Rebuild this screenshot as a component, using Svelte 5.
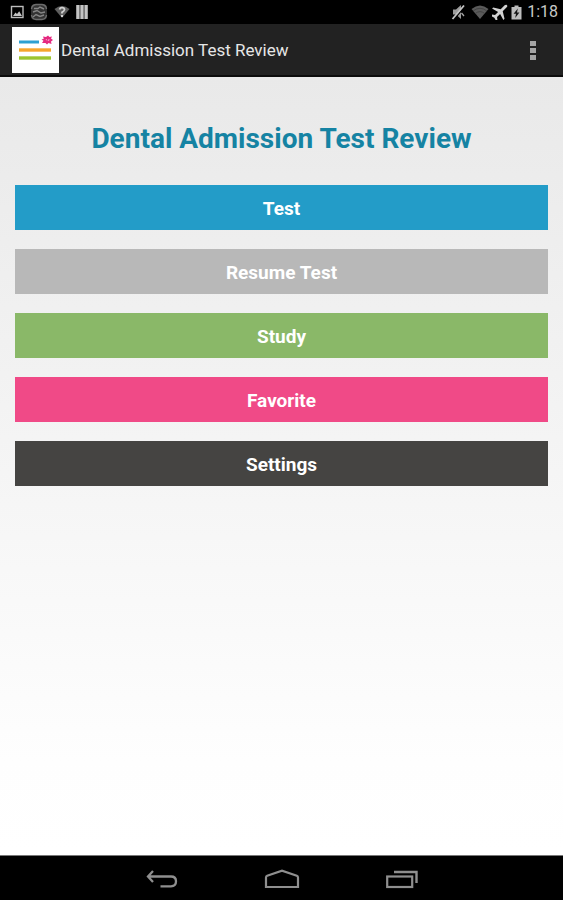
<script lang="ts">
    interface MenuItem {
        label: string;
        kind: string;
    }

    const title = "Dental Admission Test Review";

    const items: MenuItem[] = [
        { label: "Test", kind: "test" },
        { label: "Resume Test", kind: "resume" },
        { label: "Study", kind: "study" },
        { label: "Favorite", kind: "favorite" },
        { label: "Settings", kind: "settings" },
    ];
</script>

<div class="screen">
    <div class="status-bar">
        <div class="notifications">
            <!-- picture -->
            <svg width="14" height="14" viewBox="0 0 14 14">
                <rect x="1.5" y="1.5" width="11.5" height="11" fill="none" stroke="#bdbdbd" stroke-width="1.4" />
                <path d="M3 11 L5.5 7.5 L7 9 L9.2 6.2 L12 11 Z" fill="#c4c4c4" />
            </svg>
            <!-- app notification -->
            <svg width="18" height="18" viewBox="0 0 18 18">
                <rect x="1" y="1" width="16" height="16" rx="4" fill="#333" />
                <path d="M1.5 6 Q2 2 6 1.5 H12 Q16 2 16.5 6 M1.5 12 Q2 16 6 16.5 H12 Q16 16 16.5 12" fill="none" stroke="#6c6c6c" stroke-width="1.4" />
                <path d="M4 5.5 H8 L10 4 L14 6 M3 9 L7 7.5 L11 10 L15 9 M3 14 L6 11.5 L10 13.5 L14 12" fill="none" stroke="#858585" stroke-width="1.4" />
            </svg>
            <!-- wifi with question mark -->
            <svg width="16" height="14" viewBox="0 0 16 14">
                <path d="M0.5 4 Q8 -2 15.5 4 L8 13 Z" fill="#5e5e5e" />
                <path d="M5.5 4.4 Q6 2.6 8 2.6 Q10.5 2.6 10.5 4.6 Q10.5 6 8 7.4 V8.6" fill="none" stroke="#d0d0d0" stroke-width="1.8" />
                <rect x="7" y="10" width="2" height="2" fill="#d0d0d0" />
            </svg>
            <!-- bars -->
            <svg width="12" height="14" viewBox="0 0 12 14">
                <rect width="12" height="14" fill="#707070" />
                <path d="M1.8 0 V14 M6 0 V14 M10.2 0 V14" stroke="#c4c4c4" stroke-width="2.6" />
            </svg>
        </div>
        <div class="system">
            <!-- muted -->
            <svg width="15" height="16" viewBox="0 0 15 16">
                <path d="M2 5.5 H5 L10 1 V15 L5 10.5 H2 Z" fill="#9c9c9c" />
                <path d="M3 15.5 L14 2" stroke="#000" stroke-width="1.4" />
                <path d="M1.5 15 L13 1.5" stroke="#c4c4c4" stroke-width="1.8" />
                <path d="M10.5 9 L13 12" stroke="#a8a8a8" stroke-width="1.3" />
            </svg>
            <svg class="wifi" width="18" height="14" viewBox="0 0 18 14">
                <path d="M0.5 4 Q9 -3 17.5 4 L9 14 Z" fill="#5a5a5a" />
                <path d="M2.3 5.8 Q9 0.8 15.7 5.8 M4.4 8.4 Q9 4.8 13.6 8.4" fill="none" stroke="#3c3c3c" stroke-width="0.8" />
            </svg>
            <!-- airplane -->
            <svg width="16" height="16" viewBox="2 2 20 20">
                <g transform="rotate(45 12 12)">
                    <path d="M22 16 V14 L13.8 9 V2 C13.8 -1 10.2 -1 10.2 2 V9 L2 14 V16 L10.2 13.6 V19 L7 21.5 V23.5 L12 22 L17 23.5 V21.5 L13.8 19 V13.6 Z" fill="#d2d2d2" />
                </g>
            </svg>
            <!-- charging battery -->
            <svg class="battery" width="11" height="15" viewBox="0 0 11 15">
                <path d="M0.5 2 H3.5 V0.5 H7.5 V2 H10.5 V14.5 H0.5 Z" fill="#bcbcbc" />
                <path d="M6.8 3.5 L2.6 8.8 H5 L4.2 13 L8.4 7.5 H6 Z" fill="#161616" />
            </svg>
            <span class="clock">1:18</span>
        </div>
    </div>

    <header class="action-bar">
        <svg width="47" height="46" viewBox="0 0 47 46">
            <rect width="47" height="46" fill="#fff" />
            <path d="M7 15 H27" stroke="#2da0d2" stroke-width="3" />
            <path d="M7 23 H39" stroke="#f6a52c" stroke-width="3.4" />
            <path d="M7 31 H39" stroke="#9cc52f" stroke-width="3.4" />
            <path d="M31 9.5 L34 10 L36 8.5 L37.5 10 L40 9.5 L39 11.5 L41 13 L39 14.5 L39.5 17 L36.5 16 L35 17.5 L33.5 16 L30 16 L31.5 13.8 L29.5 12.5 L31.8 11.8 Z" fill="#e52a80" />
            <path d="M34 12 L35 13.5 M37 12 L36.5 14" stroke="#f8b2d1" stroke-width="0.9" />
        </svg>
        <span class="app-name">{title}</span>
        <button class="overflow" aria-label="More options">
            <svg width="8" height="22" viewBox="0 0 8 22">
                <rect x="1" y="2" width="6" height="5" fill="#a6a6a6" />
                <rect x="1" y="9" width="6" height="5" fill="#a6a6a6" />
                <rect x="1" y="16" width="6" height="5" fill="#a6a6a6" />
            </svg>
        </button>
    </header>

    <main>
        <h1>{title}</h1>
        <div class="menu">
            {#each items as item}
                <button class="item {item.kind}">{item.label}</button>
            {/each}
        </div>
    </main>

    <nav>
        <button aria-label="Back">
            <svg width="32" height="20" viewBox="0 0 32 20">
                <path d="M7 2 L2 7.5 L7 13 M2.5 7.5 H25 Q30 7.5 30 12.3 Q30 17.3 25 17.3 H14.5" fill="none" stroke="#8f8f8f" stroke-width="2.3" />
            </svg>
        </button>
        <button aria-label="Home">
            <svg width="36" height="20" viewBox="0 0 36 20">
                <path d="M2 18 V8.5 Q2 7.3 3.2 6.8 L18 1.6 L32.8 6.8 Q34 7.3 34 8.5 V18 Z" fill="none" stroke="#8f8f8f" stroke-width="2.2" />
            </svg>
        </button>
        <button aria-label="Recent apps">
            <svg width="32" height="20" viewBox="0 0 32 20">
                <rect x="1.2" y="7.5" width="25" height="10.5" fill="none" stroke="#8f8f8f" stroke-width="2.2" />
                <path d="M8 3 H30.5 V14" fill="none" stroke="#8f8f8f" stroke-width="2.4" />
            </svg>
        </button>
    </nav>
</div>

<style>
    :global(body) {
        margin: 0;
    }

    .screen {
        display: flex;
        flex-direction: column;
        min-height: 100vh;
        font-family: Roboto, sans-serif;
    }

    svg {
        display: block;
        flex: none;
    }

    button {
        margin: 0;
        padding: 0;
        border: none;
        background: none;
        font-family: inherit;
        cursor: pointer;
    }

    .status-bar {
        display: flex;
        justify-content: space-between;
        align-items: center;
        height: 24px;
        padding: 0 5px 0 10px;
        background: #000;
    }

    .notifications {
        display: flex;
        align-items: center;
        gap: 6px;
    }

    .system {
        display: flex;
        align-items: center;
        gap: 3px;
    }

    .wifi {
        margin-left: 2px;
    }

    .clock {
        margin-left: 2px;
        color: #c8c8c8;
        font-size: 16px;
        line-height: 24px;
    }

    .action-bar {
        display: flex;
        align-items: center;
        box-sizing: border-box;
        height: 53px;
        padding: 2px 20px 2px 12px;
        background: #222;
        border-bottom: 2px solid #0c0c0c;
    }

    .app-name {
        flex: 1;
        margin-left: 2px;
        color: #e6e6e6;
        font-size: 17px;
        line-height: 24px;
    }

    .overflow {
        display: flex;
        justify-content: center;
        align-items: center;
        width: 20px;
        height: 40px;
    }

    main {
        flex: 1;
        padding: 42px 15px 0;
        background: linear-gradient(#e9e9e9, #f6f6f6 55%, #fefefe 88%, #fff);
    }

    h1 {
        margin: 0 0 26px;
        color: #1583a3;
        font-size: 28px;
        font-weight: 700;
        line-height: 40px;
        text-align: center;
    }

    .menu {
        display: flex;
        flex-direction: column;
        gap: 19px;
    }

    .item {
        height: 45px;
        padding-top: 2px;
        color: #fff;
        font-size: 19px;
        font-weight: 700;
        line-height: 24px;
    }

    .test {
        background: #239cc8;
    }

    .resume {
        background: #b8b8b8;
    }

    .study {
        background: #8ab868;
    }

    .favorite {
        background: #f04a87;
    }

    .settings {
        background: #454442;
    }

    nav {
        display: flex;
        justify-content: center;
        align-items: center;
        gap: 86px;
        box-sizing: border-box;
        height: 45px;
        padding-top: 2px;
        border-top: 1px solid #777;
        background: #000;
    }
</style>
